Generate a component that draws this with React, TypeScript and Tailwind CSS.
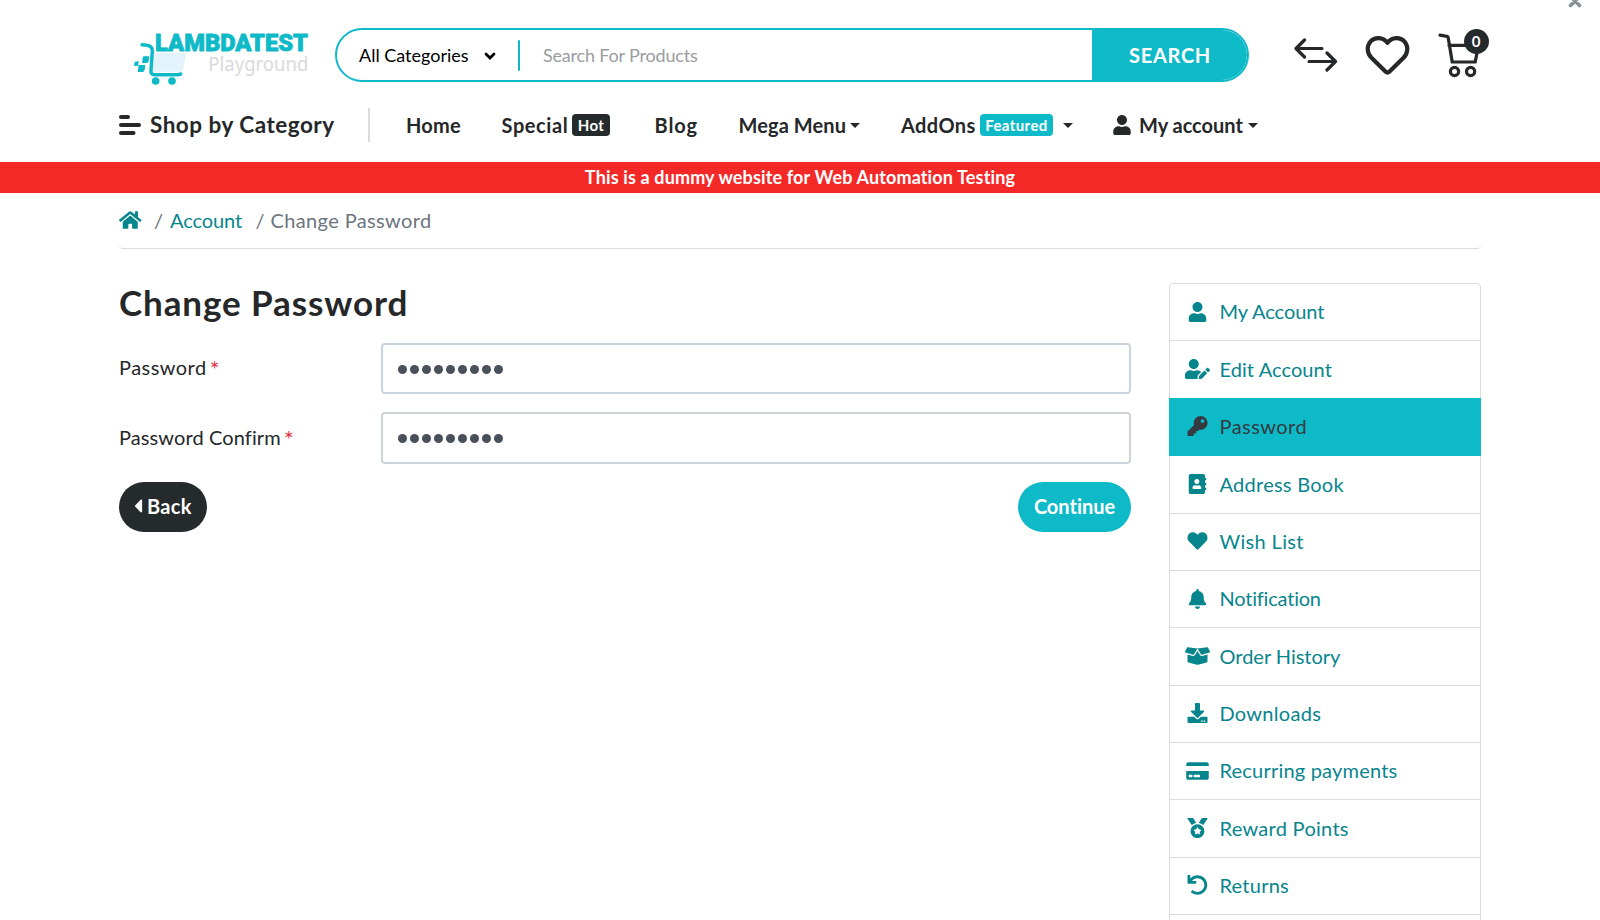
import type { IconType } from 'react-icons';
import {
  FaAddressBook,
  FaBell,
  FaBoxOpen,
  FaCaretLeft,
  FaCreditCard,
  FaDownload,
  FaHeart,
  FaHome,
  FaKey,
  FaMedal,
  FaUndo,
  FaUser,
  FaUserEdit,
} from 'react-icons/fa';

type MenuEntry = { label: string; icon: IconType; tracking: string; active?: boolean };

const accountMenu: MenuEntry[] = [
  { label: 'My Account', icon: FaUser, tracking: 'tracking-[-0.04px]' },
  { label: 'Edit Account', icon: FaUserEdit, tracking: 'tracking-[0.08px]' },
  { label: 'Password', icon: FaKey, tracking: 'tracking-[0.45px]', active: true },
  { label: 'Address Book', icon: FaAddressBook, tracking: 'tracking-[0.26px]' },
  { label: 'Wish List', icon: FaHeart, tracking: 'tracking-[0.34px]' },
  { label: 'Notification', icon: FaBell, tracking: 'tracking-[-0.2px]' },
  { label: 'Order History', icon: FaBoxOpen, tracking: 'tracking-[-0.02px]' },
  { label: 'Downloads', icon: FaDownload, tracking: 'tracking-[0.3px]' },
  { label: 'Recurring payments', icon: FaCreditCard, tracking: 'tracking-[0.2px]' },
  { label: 'Reward Points', icon: FaMedal, tracking: 'tracking-[0.29px]' },
  { label: 'Returns', icon: FaUndo, tracking: 'tracking-[0.24px]' },
];

function Logo() {
  return (
    <svg viewBox="90 60 552 174" className="h-[58px] w-[184px] overflow-visible" aria-label="LambdaTest Playground">
      <path d="M165 128H254Q259 128 258 133L249 180Q248 185 243 185H160Z" fill="#e2f3fb" />
      <path
        d="M126 104L140 106Q158 108 157 124L153 182Q152 194 163 194H236L242 192"
        fill="none"
        stroke="#0fbac8"
        strokeWidth="10.500"
        strokeLinecap="round"
        strokeLinejoin="round"
      />
      <g fill="#0fbac8">
        <path d="M104 155L116 154L115 167L102 168Z" />
        <path d="M131 139H148L146 153Q145 159 140 159H126L128 144Q128 139 131 139Z" />
        <path d="M118 165H136L134 179Q133 186 127 186H113L115 170Q115 165 118 165Z" />
        <circle cx="167" cy="213" r="11.500" />
        <circle cx="216" cy="213" r="11.500" />
      </g>
      <text
        x="165"
        y="123"
        textLength="459"
        lengthAdjust="spacingAndGlyphs"
        className="fill-[#0fbac8] stroke-[#0fbac8] font-[Roboto,sans-serif] text-[72px] font-black"
        strokeWidth="2.500"
        strokeLinejoin="round"
      >
        LAMBDATEST
      </text>
      <text
        x="325"
        y="182"
        textLength="300"
        lengthAdjust="spacingAndGlyphs"
        className="fill-[#dadada] font-['Noto_Sans',sans-serif] text-[59px]"
      >
        Playground
      </text>
    </svg>
  );
}

function SearchBar() {
  return (
    <div className="flex h-[54px] w-[914px] items-center overflow-hidden rounded-full border-2 border-[#0fbac8] bg-white text-lg">
      <span className="ml-[22px] w-[125px] text-black">All Categories</span>
      <svg viewBox="0 0 12 8" className="mt-0.5 h-2 w-3">
        <path d="M2 2L6 6L10 2" fill="none" stroke="#000" strokeWidth="2.8" strokeLinecap="round" />
      </svg>
      <span className="ml-[22px] h-[31px] w-0.5 rounded-full bg-[#0fbac8]" />
      <span className="ml-[23px] flex-1 tracking-[-0.18px] text-[#999da0]">Search For Products</span>
      <button className="flex h-full w-[155px] items-center justify-center bg-[#0fbac8] pl-px text-xl font-bold tracking-[0.7px] text-white">
        SEARCH
      </button>
    </div>
  );
}

function HeaderIcons() {
  return (
    <div className="flex">
      <svg viewBox="0 0 44 34" className="h-[34px] w-11" fill="none" stroke="#252729" strokeWidth="3.2" strokeLinecap="round" strokeLinejoin="round">
        <path d="M28 10.500H2.500M10.500 2L2 10.500L10.500 19" />
        <path d="M15 23.500H41.500M33 15L41.500 23.500L33 32" />
      </svg>
      <svg viewBox="0 0 46 42" className="ml-[27px] -mt-[4px] h-[42px] w-[46px]" fill="none" stroke="#252729" strokeWidth="4.2" strokeLinejoin="round">
        <path d="M22.500 8.800C17.800 2.800 9.800 2.700 5.600 7.300C1.400 12.200 2 19 6.200 23.500L20.700 37.700Q22.500 39.300 24.300 37.700L38.800 23.500C43 19 43.600 12.200 39.400 7.300C35.200 2.700 27.200 2.800 22.500 8.800Z" />
      </svg>
      <div className="relative ml-[27px] -mt-[6px]">
        <svg viewBox="0 0 44 46" className="h-[46px] w-11" fill="none" stroke="#252729" strokeWidth="3.200">
          <path d="M2 3.200L9 4.300Q10 4.500 10.200 5.600L14.200 30H37.200L40.500 13.400H11" strokeLinecap="round" />
          <circle cx="16.500" cy="39.500" r="4.100" />
          <circle cx="32.600" cy="39.500" r="4.100" />
        </svg>
        <span className="absolute -top-[3.500px] left-[25.500px] flex size-[25px] items-center justify-center rounded-full bg-[#252a2c] text-[15px] font-bold text-white">
          0
        </span>
      </div>
    </div>
  );
}

function Caret({ className = '' }: { className?: string }) {
  return (
    <svg viewBox="0 0 10 5" className={`h-[5px] w-2.5 ${className}`}>
      <path d="M0 0H10L5 5Z" fill="#252729" />
    </svg>
  );
}

function Nav() {
  return (
    <nav className="flex h-[34px] items-center pl-[119px] text-xl font-bold text-[#252729]">
      <svg viewBox="0 0 22 20" className="h-5 w-[22px]" stroke="#252729" strokeWidth="4" strokeLinecap="round">
        <path d="M2 2H9M2 10H20M2 18H14.500" />
      </svg>
      <span className="ml-[9px] w-[218px] text-[22.500px] tracking-[0.5px]">Shop by Category</span>
      <span className="h-[34px] w-0.5 bg-[#dcdcdc]" />
      <span className="ml-9 w-[95.500px] tracking-[0.22px]">Home</span>
      <span className="w-[70.500px] tracking-[0.6px]">Special</span>
      <span className="h-[22px] w-[38px] rounded bg-[#252a2c] text-center text-[15px] leading-[22px] tracking-[0.35px] text-white">Hot</span>
      <span className="ml-[44.500px] w-[84px] tracking-[0.9px]">Blog</span>
      <span className="w-[111.500px] tracking-[0.1px]">Mega Menu</span>
      <Caret />
      <span className="ml-[41px] w-[79px] tracking-[0.4px]">AddOns</span>
      <span className="h-[22px] w-[73px] rounded bg-[#0fbac8] text-center text-[15px] leading-[22px] tracking-[0.4px] text-white">Featured</span>
      <Caret className="ml-2.5" />
      <FaUser className="ml-[38.500px] h-5 w-5" />
      <span className="ml-[7.500px] w-[109px] tracking-[-0.02px]">My account</span>
      <Caret />
    </nav>
  );
}

function PasswordField({ label, tracking, inputClass }: { label: string; tracking: string; inputClass: string }) {
  return (
    <div className="flex items-center">
      <label className="-mt-[3px] flex w-[262px] text-[#252729]">
        <span className={tracking}>{label}</span>
        <span className="ml-[3px] h-7 text-2xl leading-8 text-[#e0384b]">*</span>
      </label>
      <div className={`flex flex-1 items-center gap-[3px] rounded border-2 pl-[14.500px] pt-px ${inputClass}`}>
        {Array.from({ length: 9 }, (_, i) => (
          <span key={i} className="size-[9px] rounded-full bg-[#495059]" />
        ))}
      </div>
    </div>
  );
}

function Sidebar() {
  return (
    <ul className="w-[312px] rounded-t border border-[#dcdcdc]">
      {accountMenu.map(({ label, icon: Icon, tracking, active }) => (
        <li
          key={label}
          className={
            active
              ? 'relative -mx-px -mt-px flex h-[58.375px] items-center border-b border-[#0fbac8] bg-[#0fbac8] pl-4 text-[#343a40]'
              : 'flex h-[57.375px] items-center border-b border-[#dcdcdc] pl-[15px] text-[#07858d]'
          }
        >
          <Icon className="-mt-px h-5 w-[25px]" />
          <span className={`-mt-[1.500px] ml-[9.500px] ${tracking}`}>{label}</span>
        </li>
      ))}
      <li className="h-[57.375px]" />
    </ul>
  );
}

export default function App() {
  return (
    <div className="relative h-[920px] w-[1600px] overflow-hidden bg-white font-[Lato,sans-serif] text-xl">
      <svg viewBox="0 0 14 14" className="absolute left-[1568px] -top-[6px] size-3.5">
        <path d="M2.500 2.500L11.500 11.500M11.500 2.500L2.500 11.500" stroke="#869293" strokeWidth="3.600" strokeLinecap="round" />
      </svg>

      <header className="h-[162px]">
        <div className="flex h-[108px] items-start pl-[130px] pt-7">
          <div className="mt-0.5 mr-[21px]">
            <Logo />
          </div>
          <SearchBar />
          <div className="ml-[45px] mt-2.5">
            <HeaderIcons />
          </div>
        </div>
        <Nav />
      </header>

      <div className="h-[31px] bg-[#f52828] text-center text-lg leading-[30px] font-bold tracking-[0.14px] text-white">
        This is a dummy website for Web Automation Testing
      </div>

      <div className="px-[119px]">
        <div className="flex h-14 items-center rounded-b border-b border-[#dcdcdc] leading-[30px]">
          <FaHome className="-mt-[2px] h-5 w-[22.500px] text-[#07858d]" />
          <div className="-mt-[2px] flex text-[#6c757d]">
            <span className="ml-[12.500px] w-4">/</span>
            <span className="w-[85.500px] tracking-[-0.09px] text-[#07858d]">Account</span>
            <span className="w-[15px]">/</span>
            <span className="tracking-[0.37px]">Change Password</span>
          </div>
        </div>

        <div className="flex items-start justify-between pt-[34px]">
          <main className="w-[1012px]">
            <h1 className="h-[60px] text-[35px] leading-[38px] font-bold tracking-[0.900px] text-[#252729]">Change Password</h1>
            <PasswordField label="Password" tracking="tracking-[0.45px]" inputClass="h-[51px] border-[#c9d4dc]" />
            <div className="mt-[18px]">
              <PasswordField label="Password Confirm" tracking="tracking-[0.1px]" inputClass="h-[52px] border-[#cdd3d9]" />
            </div>
            <div className="mt-[18px] flex justify-between font-bold text-white">
              <button className="flex h-[50px] w-[88px] items-center rounded-full bg-[#252a2c] pb-0.5 pl-3">
                <FaCaretLeft className="-mt-px h-[22px] w-[14px]" />
                <span className="ml-0.5 tracking-[0.3px]">Back</span>
              </button>
              <button className="h-[50px] w-[113px] rounded-full bg-[#0fbac8] pb-[3px] tracking-[-0.02px]">Continue</button>
            </div>
          </main>
          <Sidebar />
        </div>
      </div>
    </div>
  );
}
